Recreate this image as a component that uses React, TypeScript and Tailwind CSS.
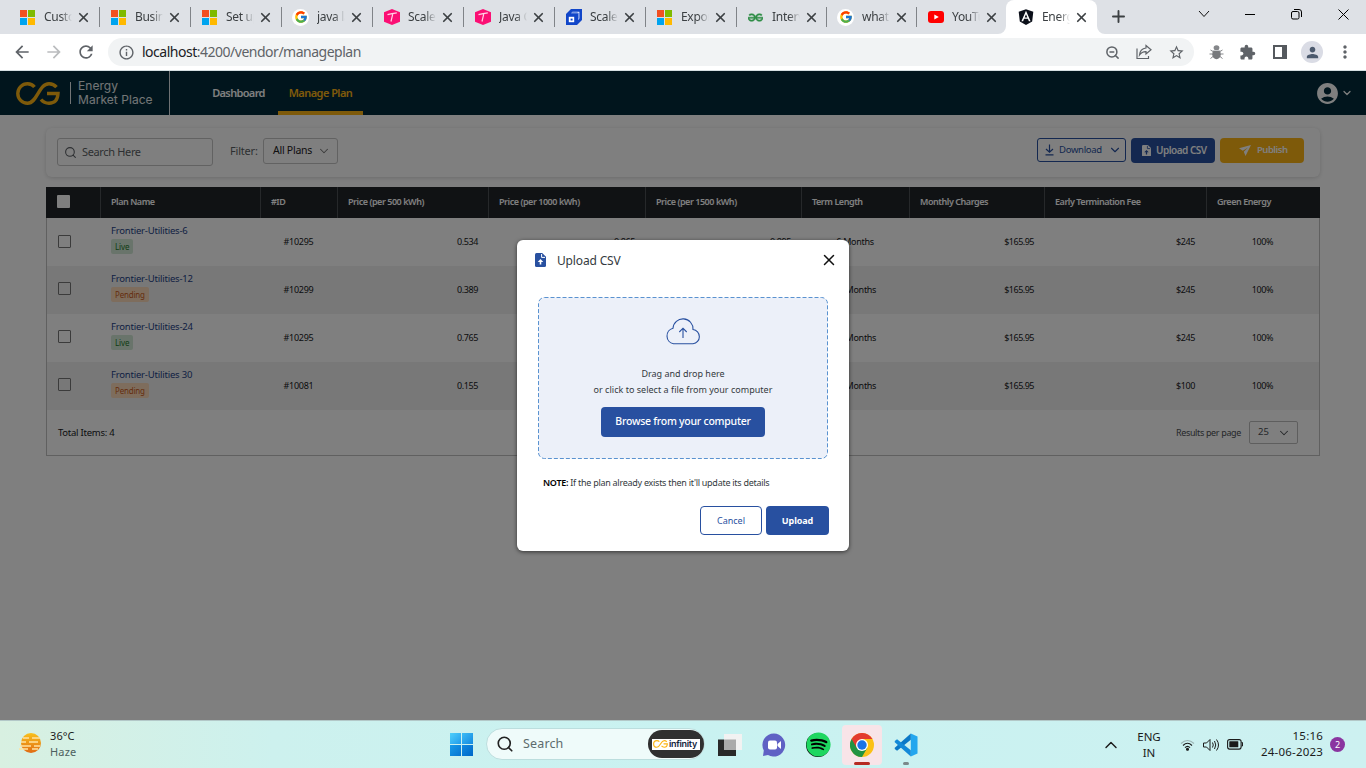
import React from "react";
import { FcGoogle } from "react-icons/fc";
import { FaAngular, FaSpotify } from "react-icons/fa";
import { SiGeeksforgeeks } from "react-icons/si";
import {
  MdArrowBack, MdArrowForward, MdRefresh, MdInfoOutline, MdStarBorder, MdExtension, MdPerson,
  MdMoreVert, MdAccountCircle,
} from "react-icons/md";
import { ChevronDown, ChevronUp, Search, X, ZoomOut, Plus } from "lucide-react";

function Microsoft() {
  return (
    <div className="grid h-[15px] w-[15px] grid-cols-2 gap-px">
      <span className="bg-[#f25022]" /><span className="bg-[#7fba00]" />
      <span className="bg-[#00a4ef]" /><span className="bg-[#ffb900]" />
    </div>
  );
}
function Google() {
  return <div className="-ml-px flex h-[17px] w-[17px] shrink-0 items-center justify-center rounded-full bg-white"><FcGoogle size={14} /></div>;
}
function PinkHex() {
  return (
    <svg width="16" height="16" viewBox="0 0 16 16">
      <path d="M8 0 16 3.200V12.800L8 16 0 12.800V3.200Z" fill="#fb0f74" />
      <path d="M3.500 5.600Q8 4.200 12.800 3.800M8.800 4.800 7 12.500" stroke="#ffd3e6" strokeWidth="1.200" fill="none" />
    </svg>
  );
}
function Scaler() {
  return (
    <svg width="16" height="16" viewBox="0 0 16 16">
      <path d="M0 5 5 0H16V11L11 16H0Z" fill="#1146c9" />
      <path d="M5 4.200 6.500 2.800H13.400V9.500L12 11V4.200Z" fill="#dce6ff" />
      <path d="M5.500 3.900 6.500 3.400H12L11.300 3.900M12.400 4.300 12.900 3.800V9.500L12.400 10" fill="#1146c9" />
      <path d="M2.800 7.800H8.200V13.200H2.800Z" fill="#fff" />
      <path d="M4.600 9.600H6.600V11.500H4.600Z" fill="#1146c9" />
    </svg>
  );
}
function YouTube() {
  return (
    <svg width="16" height="12" viewBox="0 0 16 12">
      <rect width="16" height="12" rx="3" fill="#f00" /><path d="M6.300 3.400 10.800 6 6.300 8.600Z" fill="#fff" />
    </svg>
  );
}
function FileUp({ w, className = "", arrow }: { w: number; className?: string; arrow: string }) {
  return (
    <svg width={w} viewBox="0 0 11 14" className={className}>
      <path d="M1.500 0H7.200L11 3.800V12.500Q11 14 9.500 14H1.500Q0 14 0 12.500V1.500Q0 0 1.500 0Z" fill="currentColor" />
      <path d="M6.600 1V4.400H10" fill="none" stroke={arrow} />
      <path d="M5.500 6 8.300 9H6.300V11.500H4.700V9H2.700Z" fill={arrow} />
    </svg>
  );
}
function Bug() {
  return (
    <svg width="15" height="15" viewBox="0 0 15 15" className="ml-[15px] shrink-0">
      <path d="M4 6.500 1.500 5M11 6.500 13.500 5M3.500 9H.5M11.500 9H14.500M4 11.500 1.500 13.500M11 11.500 13.500 13.500" stroke="#85878a" />
      <ellipse cx="7.500" cy="9.300" rx="4.300" ry="5" fill="#77797c" />
      <ellipse cx="7.500" cy="2.800" rx="2.900" ry="2.500" fill="#85878a" />
      <path d="M3.300 5.500H11.700" stroke="#c9cbcd" />
    </svg>
  );
}

const tabs: { title: string; icon: React.ReactNode }[] = [
  { title: "Customer", icon: <Microsoft /> },
  { title: "Business", icon: <Microsoft /> },
  { title: "Set up", icon: <Microsoft /> },
  { title: "java lan", icon: <Google /> },
  { title: "Scaler", icon: <PinkHex /> },
  { title: "Java Co", icon: <PinkHex /> },
  { title: "Scaler", icon: <Scaler /> },
  { title: "Export", icon: <Microsoft /> },
  { title: "Interview", icon: <SiGeeksforgeeks size={15} color="#2f8d46" stroke="#2f8d46" strokeWidth={0.8} /> },
  { title: "what is", icon: <Google /> },
  { title: "YouTube", icon: <YouTube /> },
  { title: "Energy", icon: <FaAngular size={18} color="#0b0f19" className="-ml-px shrink-0" /> },
];

function tabClass(i: number) {
  if (i === 11) return "relative flex w-[91px] items-center rounded-t-lg bg-white pl-3";
  return i < 8 ? "relative flex w-[91px] items-center pl-3" : "relative flex w-[90px] items-center pl-3";
}

function TabStrip() {
  return (
    <div className="flex h-[34px] bg-[#dee1e6] pl-2 text-[#3c4043]">
      {tabs.map((t, i) => {
        const active = i === tabs.length - 1;
        return (
          <div key={i} className={tabClass(i)}>
            <div className="flex w-4 shrink-0">{t.icon}</div>
            <div className="ml-2 w-7 shrink-0 overflow-hidden text-[12px] leading-4 tracking-[-0.3px] whitespace-nowrap [mask-image:linear-gradient(to_right,black_60%,transparent)]">{t.title}</div>
            <X size={15} strokeWidth={2.7} className="ml-[4px] shrink-0" />
            {i < tabs.length - 2 && <span className="absolute top-[7px] -right-px h-5 w-px bg-[#808388]" />}
            {active && (
              <>
                <svg className="absolute bottom-0 -left-2" width="8" height="8"><path d="M8 0V8H0A8 8 0 0 0 8 0Z" fill="#fff" /></svg>
                <svg className="absolute -right-2 bottom-0" width="8" height="8"><path d="M0 0V8H8A8 8 0 0 1 0 0Z" fill="#fff" /></svg>
              </>
            )}
          </div>
        );
      })}
      <Plus size={19} strokeWidth={2.4} className="mt-[7px] ml-[12px]" />
      <div className="ml-auto flex h-7 items-center text-black">
        <svg width="12" height="8" viewBox="0 0 12 8" className="mr-[35px]"><path d="M1 1 6 6.500 11 1" fill="none" stroke="#111" /></svg>
        <span className="mt-px mr-[36px] h-px w-[10px] bg-black" />
        <svg width="11" height="11" viewBox="0 0 11 11" className="mr-9"><rect x=".5" y="2.500" width="7.500" height="7.500" rx="1.500" fill="none" stroke="#000" /><path d="M3 .5H8A2.500 2.500 0 0 1 10.500 3V8" fill="none" stroke="#000" /></svg>
        <svg width="11" height="11" viewBox="0 0 11 11" className="mr-[17px]"><path d="M.5.5 10.500 10.500M10.500.5.5 10.500" stroke="#000" /></svg>
      </div>
    </div>
  );
}

function BrowserBar() {
  return (
    <div className="flex h-[37px] items-center border-b border-[#d5dfe2] bg-white text-[#5f6368]">
      <MdArrowBack size={20} className="ml-3" />
      <MdArrowForward size={20} className="ml-3 text-[#babcbe]" />
      <MdRefresh size={20} className="ml-3" />
      <div className="ml-3 flex h-7 w-[1086px] items-center rounded-full bg-[#f1f3f4] pr-[9px] pl-[10px]">
        <MdInfoOutline size={17} />
        <div className="-mt-px ml-[7px] text-[14px] tracking-[-0.49px]"><span className="text-[#202124]">localhost</span>:4200/vendor/manageplan</div>
        <ZoomOut size={15} strokeWidth={2.4} className="mr-4 ml-auto" />
        <svg width="16" height="16" viewBox="0 0 16 16" className="mr-4" fill="none" stroke="#5f6368" strokeWidth="1.200"><path d="M1 4.500V14.500H12.500V12M10 1.500 15 5.800 10 10V7.600Q6 7.400 3.500 11 4 4.800 10 4Z" /></svg>
        <MdStarBorder size={17} />
      </div>
      <Bug />
      <MdExtension size={17} className="ml-[15px]" />
      <span className="ml-[17px] h-[14px] w-[14px] border-2 border-r-[5px] border-[#55595e]" />
      <span className="ml-[14px] flex h-[22px] w-[22px] items-center justify-center rounded-full bg-[#dadce5]"><MdPerson size={17} className="text-[#4c5a6e]" /></span>
      <MdMoreVert size={20} className="ml-3" />
    </div>
  );
}

function CGLogo({ w, className = "" }: { w: number; className?: string }) {
  return (
    <svg width={w} viewBox="0 0 44 23" className={className} fill="none" stroke="#fdb515" strokeWidth="3.400">
      <path d="M18.500 5Q16 1.800 11.500 1.800A9.600 9.600 0 0 0 11.500 21.200C21.500 21.200 22.500 1.800 33 1.800Q37.500 1.800 40.500 5.200M31 11.500H42Q41.500 21.200 33 21.200 28 21.200 25 17.500" />
    </svg>
  );
}

function SiteHeader() {
  return (
    <header className="flex h-11 bg-[#022b3a] text-white">
      <div className="flex w-[170px] items-center border-r border-[#dfe5e8]">
        <CGLogo w={44} className="ml-4" />
        <span className="ml-[10px] h-[22px] w-px bg-[#e6eaec]" />
        <div className="ml-[7px] font-['Inter',sans-serif] text-[12px] leading-[14px] tracking-[0.05px] text-[#e6eaec]">Energy<br />Market Place</div>
      </div>
      <nav className="ml-[29px] flex text-[11px] font-semibold">
        <span className="flex w-[79px] items-center justify-center tracking-[-0.65px]">Dashboard</span>
        <span className="flex w-[85px] items-center justify-center border-b-4 border-[#fdb515] pt-1 tracking-[-0.55px] text-[#fdb515]">Manage Plan</span>
      </nav>
      <MdAccountCircle size={25} className="mt-[10px] ml-auto" />
      <ChevronDown size={12} strokeWidth={2.5} className="mt-[16px] mr-[13px] ml-[1px]" />
    </header>
  );
}

function Toolbar() {
  return (
    <div className="flex h-[49px] items-start rounded-md bg-white px-[11px] pt-[10px] shadow-[0_1px_4px_rgba(0,0,0,0.16)]">
      <div className="flex h-7 w-[156px] items-center rounded-[3px] border border-[#c4c4c4] pl-[6px] text-[11px] tracking-[-0.35px] text-[#5b5f64]">
        <Search size={13} strokeWidth={2} className="mt-px mr-[5px]" />Search Here
      </div>
      <span className="ml-[17px] h-[26px] w-[33px] text-[11px] leading-[26px] tracking-[-0.2px] text-[#5b5f64]">Filter:</span>
      <div className="flex h-[26px] w-[75px] items-center justify-between rounded-[3px] border border-[#c4c4c4] pr-[6px] pl-[9px] text-[10.500px] tracking-[-0.25px] whitespace-nowrap text-[#222]">All Plans<ChevronDown size={14} strokeWidth={1.8} className="text-[#777]" /></div>
      <div className="ml-auto flex gap-[5px]">
        <div className="flex h-6 w-[89px] items-center rounded-[3px] border border-[#2850a0] pl-[7px] text-[#2850a0]">
          <svg width="9" height="12" viewBox="0 0 9 12" className="mr-[5px]" fill="none" stroke="#2850a0" strokeWidth="1.200"><path d="M4.500.5V8M1 5 4.500 8.300 8 5M.5 10.800H8.500" /></svg>
          <span className="mt-px w-[44px] text-[9.500px] tracking-[-0.3px] whitespace-nowrap">Download</span><ChevronDown size={14} strokeWidth={1.9} className="ml-[5px]" />
        </div>
        <div className="flex h-[25px] w-[84px] items-center rounded-[4px] bg-[#2850a0] pl-[11px] text-[10px] font-semibold tracking-[-0.5px] whitespace-nowrap text-white"><FileUp w={9} arrow="#2850a0" className="mr-[5px]" />Upload CSV</div>
        <div className="mr-[5px] flex h-[25px] w-[84px] items-center rounded-[4px] bg-[#fdb515] pl-[19px] text-[9.500px] font-semibold tracking-[-0.5px] text-white">
          <svg width="12" height="11" viewBox="0 0 12 11" className="mr-[6px]"><path d="M0 3.200 12 0 6.500 11 4.800 6.800 9 2.600 3.800 5.800Z" fill="#fff" /></svg>Publish
        </div>
      </div>
    </div>
  );
}

const heads = ["Plan Name", "#ID", "Price (per 500 kWh)", "Price (per 1000 kWh)", "Price (per 1500 kWh)", "Term Length", "Monthly Charges", "Early Termination Fee", "Green Energy"];
const rows = [
  ["Frontier-Utilities-6", "Live", "#10295", "0.534", "0.865", "0.895", "6 Months", "$165.95", "$245"],
  ["Frontier-Utilities-12", "Pending", "#10299", "0.389", "", "", "12 Months", "$165.95", "$245"],
  ["Frontier-Utilities-24", "Live", "#10295", "0.765", "", "", "24 Months", "$165.95", "$245"],
  ["Frontier-Utilities 30", "Pending", "#10081", "0.155", "", "", "30 Months", "$165.95", "$100"],
];
const rowCols = "grid h-12 grid-cols-[53px_160px_77px_151px_157px_156px_108px_135px_162px_113px]";

function PlanTable() {
  return (
    <section className="mt-[10px] h-[269px] border border-[#c0c0c0] text-[9px] text-[#16181b]">
      <div className="-mx-px -mt-px grid h-[31px] grid-cols-[54px_160px_77px_151px_157px_156px_108px_135px_162px_114px] bg-[#212529] text-white">
        <span className="mt-2 ml-[11px] h-[13px] w-[13px] rounded-[1px] bg-white" />
        {heads.map((h) => (
          <span key={h} className="border-l border-[#4c5054] pl-[10px] leading-[30px] font-semibold tracking-[-0.45px] whitespace-nowrap">{h}</span>
        ))}
      </div>
      {rows.map((r, i) => (
        <div key={i} className={i % 2 ? rowCols + " bg-[#f1f1f1]" : rowCols}>
          <span className={i ? "mt-[16px] ml-[11px] h-[13px] w-[13px] rounded-[1px] border border-[#767676]" : "mt-[17px] ml-[11px] h-[13px] w-[13px] rounded-[1px] border border-[#767676]"} />
          <div className="pt-[5px] pl-[11px]">
            <div className="h-4 text-[9.500px] leading-4 tracking-[-0.2px] text-[#1e3f86]">{r[0]}</div>
            <span className={r[1] === "Live" ? "inline-block h-[15px] rounded-[2px] bg-[#d3e9d6] px-1 align-top text-[8px] leading-[16px] tracking-[-0.1px] text-[#1d7a2c]" : "inline-block h-[15px] rounded-[2px] bg-[#fcdabb] px-1 align-top text-[8px] leading-[15px] tracking-[-0.2px] text-[#cb5a1c]"}>{r[1]}</span>
          </div>
          <span className="text-center leading-[47px] tracking-[-0.3px]">{r[2]}</span>
          <span className="pr-[10px] text-right leading-[47px] tracking-[-0.4px]">{r[3]}</span>
          <span className="pr-[10px] text-right leading-[47px] tracking-[-0.4px]">{r[4]}</span>
          <span className="pr-[10px] text-right leading-[47px] tracking-[-0.4px]">{r[5]}</span>
          <span className="text-center leading-[47px] tracking-[-0.3px]">{r[6]}</span>
          <span className="pr-[10px] text-right leading-[47px] tracking-[-0.5px]">{r[7]}</span>
          <span className="pr-[11px] text-right leading-[47px] tracking-[-0.4px]">{r[8]}</span>
          <span className="text-center leading-[47px] tracking-[-0.4px]">100%</span>
        </div>
      ))}
      <div className="flex h-[45px] items-center pr-[21px] pl-[11px] text-[9.500px]">
        <span className="mt-[2px] tracking-[-0.25px]">Total Items: 4</span>
        <span className="mr-2 ml-auto text-[9px] tracking-[-0.35px] text-[#4c5054]">Results per page</span>
        <div className="flex h-[23px] w-[49px] items-center justify-between rounded-[2px] border border-[#bdbdbd] pr-[6px] pl-2 text-[#4c5054]">25<ChevronDown size={14} strokeWidth={1.8} /></div>
      </div>
    </section>
  );
}

function UploadModal() {
  return (
    <div className="absolute inset-0 bg-black/50">
      <div className="mx-auto mt-[169px] flex h-[311px] w-[332px] flex-col rounded-[6px] bg-white text-[#343a40] shadow-[0_1px_4px_rgba(0,0,0,0.6)]">
        <div className="flex h-[41px] items-center pr-[11px] pl-[18px] text-[12px]">
          <FileUp w={11} arrow="#fff" className="-mt-[2px] text-[#2850a0]" />
          <span className="ml-[11px] tracking-[-0.15px]">Upload CSV</span>
          <X size={18} strokeWidth={2} className="-mt-[2px] ml-auto text-[#111]" />
        </div>
        <div className="relative mt-4 ml-[21px] flex h-[162px] w-[290px] flex-col items-center text-[9px]">
          <svg className="absolute inset-0" width="290" height="162"><rect x=".5" y=".5" width="289" height="161" rx="6" fill="#ecf0f9" stroke="#5a92d0" strokeDasharray="4 2" /></svg>
          <svg className="relative mt-[21px]" width="36" height="27" viewBox="0 0 36 27" fill="none" stroke="#2850a0" strokeWidth="1.100"><path d="M8.500 25.800A8 8 0 0 1 8 10.200A10 10 0 0 1 28 11.500A7.200 7.200 0 0 1 28 25.800ZM18 20V10.500M14.300 14 18 10.200 21.700 14" /></svg>
          <p className="relative mt-[21px] leading-4">Drag and drop here</p>
          <p className="relative leading-4 tracking-[0.02px]">or click to select a file from your computer</p>
          <button className="relative mt-[9px] h-[30px] w-[164px] rounded-[4px] bg-[#2850a0] text-[10.500px] font-medium tracking-[-0.25px] text-white">Browse from your computer</button>
        </div>
        <p className="mt-4 ml-[26px] text-[9px] leading-4 tracking-[-0.27px]"><b className="font-semibold text-black">NOTE:</b> If the plan already exists then it'll update its details</p>
        <div className="mt-[15px] mr-5 flex justify-end gap-1 text-[9px]">
          <button className="h-[29px] w-[62px] rounded-[4px] border border-[#2850a0] text-[#2850a0]">Cancel</button>
          <button className="h-[29px] w-[63px] rounded-[4px] bg-[#2850a0] font-bold tracking-[-0.1px] text-white">Upload</button>
        </div>
      </div>
    </div>
  );
}

function Chrome() {
  return (
    <svg width="24" height="24" viewBox="0 0 24 24">
      <circle cx="12" cy="12" r="12" fill="#fbc116" />
      <path d="M1.600 6A12 12 0 0 0 12 24L17.200 15 12 12Z" fill="#229342" />
      <path d="M12 6H22.400A12 12 0 0 0 1.600 6L6.800 15Z" fill="#e33b2e" />
      <circle cx="12" cy="12" r="6" fill="#fff" /><circle cx="12" cy="12" r="4.700" fill="#1a73e8" />
    </svg>
  );
}

function Taskbar() {
  return (
    <footer className="flex h-12 items-center border-t border-[#b3c8c8] bg-[linear-gradient(90deg,#d8f0e1_0,#cdf1ee_20%,#c9f2f1_50%,#cdf1f1_100%)] text-[#1b1b1b]">
      <svg width="24" height="22" viewBox="0 0 24 22" className="-mt-[3px] ml-[18px]">
        <defs><linearGradient id="sun" x1="0" y1="0" x2="0" y2="1"><stop stopColor="#f9c11c" /><stop offset="1" stopColor="#e06b14" /></linearGradient></defs>
        <circle cx="13" cy="11" r="10" fill="url(#sun)" />
        <path d="M5 6H11M14 6H22M3 10H8M11 10H20M2 14H13M16 14H22M1 17H10M14 17H20" stroke="#ffe2a1" strokeWidth="1.300" />
      </svg>
      <div className="-mt-[2px] ml-2 w-[60px] text-[11px] leading-4"><div className="tracking-[0.1px]">36°C</div><div className="tracking-[0.2px] text-[#4d5f60]">Haze</div></div>
      <div className="ml-[340px] grid h-[23px] w-[23px] shrink-0 grid-cols-2 gap-px">
        <span className="bg-gradient-to-br from-[#4fd0fb] to-[#209ceb]" /><span className="bg-gradient-to-br from-[#3cbcf5] to-[#138ae0]" />
        <span className="bg-gradient-to-br from-[#189be9] to-[#0874d1]" /><span className="bg-gradient-to-br from-[#138be0] to-[#0067c8]" />
      </div>
      <div className="-mt-px ml-[13px] flex h-8 w-[219px] shrink-0 items-center rounded-full border border-[#bcdede] bg-[#effbfa] pl-[9px] text-[12.500px] text-[#5d6b6d]">
        <Search size={18} strokeWidth={2.200} className="mr-[9px] text-[#222]" /><span className="tracking-[0.15px]">Search</span>
        <div className="ml-auto flex h-7 w-[56px] items-center justify-center rounded-full bg-[#303030]">
          <div className="flex h-[11px] w-[48px] items-center overflow-hidden bg-white pl-px"><CGLogo w={15} className="shrink-0" /><span className="ml-px font-['Inter',sans-serif] text-[9px] leading-[10px] font-semibold tracking-[-0.3px] text-[#14233c]">infinity</span></div>
        </div>
      </div>
      <svg width="25" height="24" viewBox="0 0 25 24" className="ml-[13px] shrink-0"><path d="M0 6.500H18V23H0Z" fill="#292929" /><path d="M6 1H24V17H6Z" fill="#f2f2f2" /><path d="M6 6.500H18V17H6Z" fill="#aaa" /></svg>
      <svg width="24" height="24" viewBox="0 0 24 24" className="ml-[19px] shrink-0"><path d="M12 .5A11.500 11.500 0 1 1 6 22L1 23 1.800 17.500A11.500 11.500 0 0 1 12 .5Z" fill="#5f61c4" /><rect x="6" y="7.500" width="9" height="9" rx="2" fill="#fff" /><path d="M15.500 11 19 8V16L15.500 13Z" fill="#fff" /></svg>
      <div className="ml-5 flex h-6 w-6 shrink-0 items-center justify-center rounded-full bg-black"><FaSpotify size={25} color="#1ed760" className="shrink-0" /></div>
      <div className="relative ml-[12px] flex h-10 w-10 shrink-0 items-center justify-center rounded bg-[#f8e4e8]"><Chrome /><span className="absolute bottom-0 h-[3px] w-4 rounded-full bg-[#b52a22]" /></div>
      <div className="relative ml-3 flex h-10 w-6 shrink-0 items-center justify-center">
        <svg width="25" height="24" viewBox="0 0 25 24"><path d="M17.500 0 24.500 3.200V20.800L17.500 24Z" fill="#24a6ee" /><path d="M17.500 0V6.600L3.200 18 .8 16.200V14.800Z" fill="#0b78c6" /><path d="M17.500 24V17.400L3.200 6 .8 7.800V9.200Z" fill="#1389d8" /></svg>
        <span className="absolute bottom-0 h-[3px] w-[6px] rounded-full bg-[#7b898a]" />
      </div>
      <ChevronUp size={20} strokeWidth={1.7} className="ml-auto" />
      <div className="ml-[15px] w-[26px] text-center text-[11.500px] leading-4">ENG<br />IN</div>
      <svg width="15" height="12" viewBox="0 0 15 12" className="ml-[18px]" fill="none" stroke="#1b1b1b" strokeWidth="1.100"><path d="M1 4.500Q7.500-1.500 14 4.500" stroke="#9bb4b4" /><path d="M3 6.500Q7.500 2 12 6.500M5 8.700Q7.500 6 10 8.700" /><circle cx="7.500" cy="10.300" r="1" fill="#1b1b1b" /></svg>
      <svg width="17" height="14" viewBox="0 0 17 14" className="ml-2" fill="none" stroke="#1b1b1b"><path d="M.5 5H3.500L7 1.500V12.500L3.500 9H.5ZM9.500 4.500Q11 7 9.500 9.500M11.500 3Q14 7 11.500 11M13.500 1.500Q17.500 7 13.500 12.500" /></svg>
      <svg width="17" height="11" viewBox="0 0 17 11" className="ml-[7px]"><rect x=".6" y=".6" width="13.500" height="9.500" rx="2" fill="none" stroke="#1b1b1b" strokeWidth="1.100" /><rect x="2.300" y="2.300" width="9" height="6" rx=".5" fill="#1b1b1b" /><path d="M14.500 3.500H15.500V7H14.500" stroke="#1b1b1b" fill="none" /></svg>
      <div className="-mt-[2px] ml-[11px] w-[68px] text-right text-[11.500px] leading-4 tracking-[0.2px] whitespace-nowrap">15:16<br />24-06-2023</div>
      <span className="mr-[21px] ml-[7px] flex h-[15px] w-[15px] items-center justify-center rounded-full bg-[#8a35a0] text-[9px] text-white">2</span>
    </footer>
  );
}

export default function App() {
  return (
    <div className="flex h-[768px] w-[1366px] flex-col overflow-hidden bg-white font-['Noto_Sans','Open_Sans',sans-serif]">
      <TabStrip />
      <BrowserBar />
      <div className="relative h-[649px]">
        <SiteHeader />
        <main className="px-[46px] pt-[13px]">
          <Toolbar />
          <PlanTable />
        </main>
        <UploadModal />
      </div>
      <Taskbar />
    </div>
  );
}
